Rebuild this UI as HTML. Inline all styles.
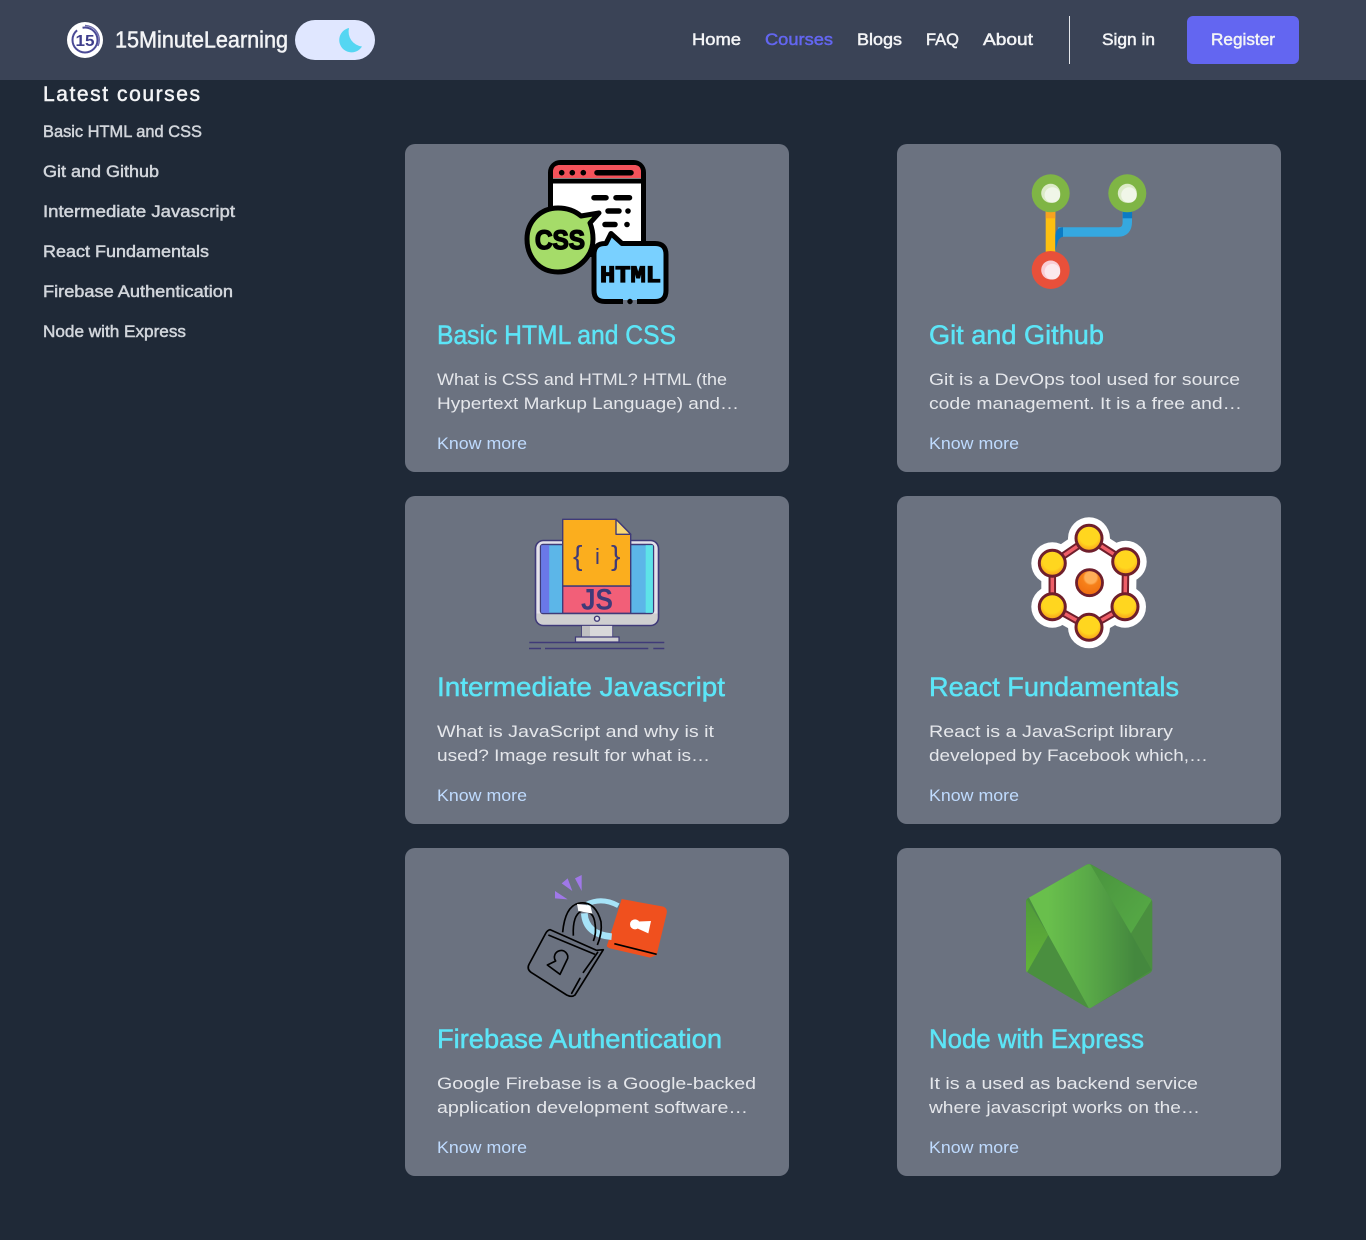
<!DOCTYPE html>
<html lang="en"><head><meta charset="utf-8"><title>15MinuteLearning</title>
<style>
html,body{margin:0;padding:0;background:#1f2937}
svg{display:block}
text{font-family:"Liberation Sans",sans-serif}
.m{stroke-width:.5;paint-order:stroke}
.nav{font-size:17px;fill:#f3f4f6;stroke:#f3f4f6}
.side{font-size:17px;fill:#d1d5db;stroke:#d1d5db}
.t{font-size:27px;fill:#5ce5f7;stroke:#5ce5f7}
.d{font-size:16.5px;fill:#e5e7eb}
.k{font-size:16.5px;fill:#bfdbfe}
</style></head><body>
<svg xmlns="http://www.w3.org/2000/svg" width="1366" height="1240" viewBox="0 0 1366 1240">
<defs>
<linearGradient id="n1" gradientUnits="userSpaceOnUse" x1="100" y1="0" x2="360" y2="0"><stop offset="0" stop-color="#69bf4c"/><stop offset=".45" stop-color="#5aaa48"/><stop offset="1" stop-color="#44883e"/></linearGradient>
<linearGradient id="n2" gradientUnits="userSpaceOnUse" x1="250" y1="60" x2="400" y2="180"><stop offset="0" stop-color="#4b963f"/><stop offset="1" stop-color="#55a845"/></linearGradient>
<linearGradient id="n3" gradientUnits="userSpaceOnUse" x1="50" y1="130" x2="60" y2="350"><stop offset="0" stop-color="#509a3a"/><stop offset="1" stop-color="#62b438"/></linearGradient>
<radialGradient id="y" cx=".5" cy=".38" r=".62"><stop offset=".6" stop-color="#ffd61f"/><stop offset=".75" stop-color="#fdbd1d"/><stop offset="1" stop-color="#f8a01a"/></radialGradient>
<radialGradient id="o" cx=".55" cy=".3" r=".75"><stop offset=".3" stop-color="#ffae58"/><stop offset=".4" stop-color="#f7811a"/><stop offset="1" stop-color="#ee6a0e"/></radialGradient>
</defs>
<rect width="1366" height="1240" fill="#1f2937"/>
<rect width="1366" height="80" fill="#3a4356"/>

<!-- logo -->
<circle cx="85" cy="40" r="18" fill="#fff"/>
<circle cx="85" cy="40" r="12.5" fill="none" stroke="#4a4a96" stroke-width="2" stroke-dasharray="50 6"/>
<path d="M85 25.500A14.500 14.500 0 0 1 98 46" fill="none" stroke="#6d6cab" stroke-width="1.400"/>
<text x="75.500" y="46" font-size="16" font-weight="700" fill="#3f3e8c" textLength="19" lengthAdjust="spacingAndGlyphs">15</text>
<text class="m" x="115" y="47.500" font-size="23" fill="#f3f4f6" stroke="#f3f4f6" textLength="173" lengthAdjust="spacingAndGlyphs">15MinuteLearning</text>
<rect x="295" y="20" width="80" height="40" rx="20" fill="#e0e7ff"/>
<path d="M349 28A12.300 12.300 0 1 0 362 46.500A15 15 0 0 1 349 28Z" fill="#55d6f2"/>

<!-- nav -->
<text class="nav m" x="692" y="45" textLength="49" lengthAdjust="spacingAndGlyphs">Home</text>
<text class="nav m" x="765" y="45" style="fill:#6366f1;stroke:#6366f1" textLength="68" lengthAdjust="spacingAndGlyphs">Courses</text>
<text class="nav m" x="857" y="45" textLength="45" lengthAdjust="spacingAndGlyphs">Blogs</text>
<text class="nav m" x="926" y="45" textLength="33" lengthAdjust="spacingAndGlyphs">FAQ</text>
<text class="nav m" x="983" y="45" textLength="50" lengthAdjust="spacingAndGlyphs">About</text>
<rect x="1069" y="16" width="1" height="48" fill="#e5e7eb"/>
<text class="nav m" x="1102" y="45" textLength="53" lengthAdjust="spacingAndGlyphs">Sign in</text>
<rect x="1187" y="16" width="112" height="48" rx="6" fill="#6366f1"/>
<text class="nav m" x="1211" y="45" textLength="64" lengthAdjust="spacingAndGlyphs">Register</text>

<!-- sidebar -->
<text class="m" x="43" y="101" font-size="21" fill="#f3f4f6" stroke="#f3f4f6" textLength="157" lengthAdjust="spacing">Latest courses</text>
<text class="side m" x="43" y="137" textLength="159" lengthAdjust="spacingAndGlyphs">Basic HTML and CSS</text>
<text class="side m" x="43" y="177" textLength="116" lengthAdjust="spacingAndGlyphs">Git and Github</text>
<text class="side m" x="43" y="217" textLength="192" lengthAdjust="spacingAndGlyphs">Intermediate Javascript</text>
<text class="side m" x="43" y="257" textLength="166" lengthAdjust="spacingAndGlyphs">React Fundamentals</text>
<text class="side m" x="43" y="297" textLength="190" lengthAdjust="spacingAndGlyphs">Firebase Authentication</text>
<text class="side m" x="43" y="337" textLength="143" lengthAdjust="spacingAndGlyphs">Node with Express</text>

<!-- cards -->
<g fill="#6b7280">
<rect x="405" y="144" width="384" height="328" rx="10"/>
<rect x="897" y="144" width="384" height="328" rx="10"/>
<rect x="405" y="496" width="384" height="328" rx="10"/>
<rect x="897" y="496" width="384" height="328" rx="10"/>
<rect x="405" y="848" width="384" height="328" rx="10"/>
<rect x="897" y="848" width="384" height="328" rx="10"/>
</g>

<text class="t m" x="437" y="344" textLength="239" lengthAdjust="spacingAndGlyphs">Basic HTML and CSS</text>
<text class="d" x="437" y="385" textLength="290" lengthAdjust="spacingAndGlyphs">What is CSS and HTML? HTML (the</text>
<text class="d" x="437" y="409" textLength="302" lengthAdjust="spacingAndGlyphs">Hypertext Markup Language) and…</text>
<text class="k" x="437" y="449" textLength="90" lengthAdjust="spacingAndGlyphs">Know more</text>

<text class="t m" x="929" y="344" textLength="175" lengthAdjust="spacingAndGlyphs">Git and Github</text>
<text class="d" x="929" y="385" textLength="311" lengthAdjust="spacingAndGlyphs">Git is a DevOps tool used for source</text>
<text class="d" x="929" y="409" textLength="313" lengthAdjust="spacingAndGlyphs">code management. It is a free and…</text>
<text class="k" x="929" y="449" textLength="90" lengthAdjust="spacingAndGlyphs">Know more</text>

<text class="t m" x="437" y="696" textLength="288" lengthAdjust="spacingAndGlyphs">Intermediate Javascript</text>
<text class="d" x="437" y="737" textLength="277" lengthAdjust="spacingAndGlyphs">What is JavaScript and why is it</text>
<text class="d" x="437" y="761" textLength="273" lengthAdjust="spacingAndGlyphs">used? Image result for what is…</text>
<text class="k" x="437" y="801" textLength="90" lengthAdjust="spacingAndGlyphs">Know more</text>

<text class="t m" x="929" y="696" textLength="250" lengthAdjust="spacingAndGlyphs">React Fundamentals</text>
<text class="d" x="929" y="737" textLength="244" lengthAdjust="spacingAndGlyphs">React is a JavaScript library</text>
<text class="d" x="929" y="761" textLength="279" lengthAdjust="spacingAndGlyphs">developed by Facebook which,…</text>
<text class="k" x="929" y="801" textLength="90" lengthAdjust="spacingAndGlyphs">Know more</text>

<text class="t m" x="437" y="1048" textLength="285" lengthAdjust="spacingAndGlyphs">Firebase Authentication</text>
<text class="d" x="437" y="1089" textLength="319" lengthAdjust="spacingAndGlyphs">Google Firebase is a Google-backed</text>
<text class="d" x="437" y="1113" textLength="311" lengthAdjust="spacingAndGlyphs">application development software…</text>
<text class="k" x="437" y="1153" textLength="90" lengthAdjust="spacingAndGlyphs">Know more</text>

<text class="t m" x="929" y="1048" textLength="215" lengthAdjust="spacingAndGlyphs">Node with Express</text>
<text class="d" x="929" y="1089" textLength="269" lengthAdjust="spacingAndGlyphs">It is a used as backend service</text>
<text class="d" x="929" y="1113" textLength="271" lengthAdjust="spacingAndGlyphs">where javascript works on the…</text>
<text class="k" x="929" y="1153" textLength="90" lengthAdjust="spacingAndGlyphs">Know more</text>

<!-- icon 1: HTML/CSS -->
<rect x="550.500" y="162.500" width="93" height="92" rx="10" fill="#fff" stroke="#000" stroke-width="5"/>
<path d="M553 178V172q0-7 7-7h74q7 0 7 7v6z" fill="#f4525a"/>
<rect x="550" y="178.500" width="94" height="5" fill="#000"/>
<g fill="#000"><circle cx="561.700" cy="172.700" r="2.800"/><circle cx="572.300" cy="172.700" r="2.800"/><circle cx="583.300" cy="172.700" r="2.800"/><circle cx="628" cy="211" r="2.800"/><circle cx="627" cy="224.500" r="2.800"/></g>
<g stroke="#000" stroke-width="5.500" stroke-linecap="round"><path d="M597 172.700H631M594 197.700H606M616 197.700H629.500M608 211H619M605 224.500H615"/></g>
<path d="M558 208c9 0 17 3 23 8l18-3-9 10c2 5 3 10 3 16 0 18-16 33-35 33s-31-15-31-33 14-31 31-31z" fill="#a5dc69" stroke="#000" stroke-width="5" stroke-linejoin="round"/>
<text x="535" y="249" font-size="27" font-weight="700" fill="#000" stroke="#000" stroke-width="1.500" textLength="50" lengthAdjust="spacingAndGlyphs">CSS</text>
<path d="M606 243.500L611 233.500l11 10h33q11 0 11 11v36q0 11-11 11h-50q-11 0-11-11v-36q0-11 11-11z" fill="#79d0ff" stroke="#000" stroke-width="5" stroke-linejoin="round"/>
<rect x="623" y="298.500" width="14" height="5.500" fill="#6b7280"/><rect x="623" y="297" width="14" height="3" fill="#79d0ff"/><circle cx="630" cy="301.500" r="2.700" fill="#000"/>
<text x="600" y="282" font-size="23" font-weight="700" fill="#000" stroke="#000" stroke-width="1.200" textLength="61" lengthAdjust="spacingAndGlyphs" style="font-family:'Liberation Mono',monospace">HTML</text>

<!-- icon 2: Git -->
<rect x="1045.700" y="205" width="9.600" height="50" fill="#fdc010"/>
<rect x="1045.700" y="208" width="9.600" height="10.300" fill="#f7a21f"/>
<path d="M1058 232H1118Q1127.300 232 1127.300 222V208" fill="none" stroke="#35a8e0" stroke-width="9.400"/>
<path d="M1055.300 251V236Q1055.300 228 1063 227.300V236.700Q1060 237 1058 241Z" fill="#0b7bc4"/>
<rect x="1122.700" y="208" width="9.400" height="10.300" fill="#0b7bc4"/>
<circle cx="1050.700" cy="193.300" r="19" fill="#7fb545"/>
<circle cx="1127.300" cy="193.300" r="19" fill="#7fb545"/>
<circle cx="1050.700" cy="270" r="19" fill="#e8503a"/>
<circle cx="1050.700" cy="193.300" r="9.500" fill="#dcebc8"/><circle cx="1127.300" cy="193.300" r="9.500" fill="#dcebc8"/><circle cx="1050.700" cy="270" r="9.500" fill="#f9cdd5"/>
<circle cx="1052.400" cy="195" r="7.800" fill="#f0f6e8"/>
<circle cx="1129" cy="195" r="7.800" fill="#f0f6e8"/>
<circle cx="1052.400" cy="271.700" r="7.800" fill="#fbe9ee"/>

<!-- icon 3: JS -->
<rect x="535.500" y="540.500" width="123" height="85" rx="8" fill="#e4e2ea" stroke="#3f3a78" stroke-width="1.600"/>
<path d="M536.500 613.500H657.500V617q0 7.500-7.500 7.500H544q-7.500 0-7.500-7.500z" fill="#cfcfd0"/>
<rect x="540.500" y="544.500" width="113" height="69" rx="2.500" fill="#5cb6e8" stroke="#3f3a78" stroke-width="1.400"/>
<rect x="541.200" y="545.200" width="8" height="67.600" fill="#6a78e8"/>
<rect x="645.700" y="545.200" width="7.200" height="67.600" fill="#5ee3e8"/>
<rect x="562.700" y="586" width="68" height="27.300" fill="#f25f78" stroke="#3f3a78" stroke-width="1.400"/>
<path d="M562.700 519.300H616L630.700 534.300V586H562.700Z" fill="#fbae1e" stroke="#3f3a78" stroke-width="1.400" stroke-linejoin="round"/>
<path d="M616 519.300L630.700 534.300H616Z" fill="#f9d873" stroke="#3f3a78" stroke-width="1.400" stroke-linejoin="round"/>
<text x="581" y="609.500" font-size="30" font-weight="700" fill="#3f3a78" textLength="32" lengthAdjust="spacingAndGlyphs">JS</text>
<text x="573" y="565" font-size="28" fill="#3f3a78" textLength="9.500" lengthAdjust="spacingAndGlyphs">{</text>
<text x="595" y="564" font-size="22" fill="#3f3a78">i</text>
<text x="611" y="565" font-size="28" fill="#3f3a78" textLength="9.500" lengthAdjust="spacingAndGlyphs">}</text>
<circle cx="597" cy="618.700" r="2.500" fill="#e4e2ea" stroke="#3f3a78" stroke-width="1.400"/>
<rect x="581.700" y="625.500" width="31" height="11.500" fill="#d9d9da" stroke="#3f3a78" stroke-width=".8"/>
<rect x="582" y="626" width="8" height="10.600" fill="#c0c0c2"/>
<rect x="575.500" y="637" width="43.500" height="5" fill="#cfcfd0" stroke="#3f3a78" stroke-width="1.200"/>
<path d="M529.300 642.500H664.300M529 648.500H541M545 648.500H648.300M653.300 648.500H664.300" stroke="#3f3a78" stroke-width="1.400" fill="none"/>

<!-- icon 4: React -->
<g stroke-linejoin="round">
<path d="M1089 538.300L1125.700 561.700L1125 606.700L1089 627.300L1052.300 606.700L1052.300 563.300Z" fill="#fff" stroke="#fff" stroke-width="22"/>
<g fill="#fff"><circle cx="1089" cy="538.300" r="21"/><circle cx="1125.700" cy="561.700" r="21"/><circle cx="1125" cy="606.700" r="21"/><circle cx="1089" cy="627.300" r="21"/><circle cx="1052.300" cy="606.700" r="21"/><circle cx="1052.300" cy="563.300" r="21"/></g>
<path d="M1089 538.300L1125.700 561.700L1125 606.700L1089 627.300L1052.300 606.700L1052.300 563.300Z" fill="none" stroke="#6f1f2c" stroke-width="7.500"/>
<path d="M1089 538.300L1125.700 561.700L1125 606.700L1089 627.300L1052.300 606.700L1052.300 563.300Z" fill="none" stroke="#ee5f68" stroke-width="3.500"/>
</g>
<g fill="url(#y)" stroke="#6f1f2c" stroke-width="3">
<circle cx="1089" cy="538.300" r="13"/><circle cx="1125.700" cy="561.700" r="13"/><circle cx="1125" cy="606.700" r="13"/><circle cx="1089" cy="627.300" r="13"/><circle cx="1052.300" cy="606.700" r="13"/><circle cx="1052.300" cy="563.300" r="13"/>
</g>
<circle cx="1089.500" cy="582.700" r="13" fill="url(#o)" stroke="#6f1f2c" stroke-width="2.800"/>

<!-- icon 5: Firebase lock -->
<g transform="translate(515 865) scale(.33333)">
<path d="M120 78L120 100L158 103ZM140 55L158 40L172 78ZM180 40L200 30L200 78Z" fill="#a078e8"/>
<path d="M320 102L445 125Q458 130 455 145L425 270L405 278L285 250Q272 245 277 238Z" fill="#f0501e"/>
<path d="M298 236L425 268" stroke="#000" stroke-width="5" fill="none"/>
<circle cx="360" cy="178" r="15" fill="#fff"/><path d="M362 170L408 168L400 205L362 188Z" fill="#fff"/>
<path d="M310 122Q260 95 215 118" stroke="#a6e3f8" stroke-width="15" fill="none"/>
<path d="M208 145Q212 208 290 215" stroke="#a6e3f8" stroke-width="20" fill="none"/>
<path d="M143 202Q150 125 190 115Q240 105 258 170Q262 205 247 240" fill="none" stroke="#000" stroke-width="5"/>
<path d="M175 212Q172 150 200 138Q235 135 240 175Q245 205 235 228" fill="none" stroke="#000" stroke-width="5"/>
<path d="M186 117L226 122L232 146L190 138Z" fill="#fff"/>
<path d="M105 194L245 256L265 254L180 390Q170 398 155 390L48 322Q35 312 42 298L92 205Q97 196 105 194Z" fill="none" stroke="#000" stroke-width="5" stroke-linejoin="round"/>
<path d="M100 210L240 268" stroke="#000" stroke-width="5" fill="none"/>
<path d="M248 262L205 322M195 340L170 385" stroke="#000" stroke-width="5" fill="none" stroke-linecap="round"/>
<path d="M122 288A20 20 0 1 1 158 280L135 328L97 300Z" fill="none" stroke="#000" stroke-width="5" stroke-linejoin="round"/>
</g>

<!-- icon 6: Node -->
<g transform="translate(1015 855) scale(.33333)">
<path d="M213 30Q222 24 232 30L403 128Q412 133 412 143V340Q412 350 403 355L232 456Q222 462 213 456L42 355Q33 350 33 340V140Q33 132 42 128Z" fill="#4a8f3f"/>
<path d="M35 132L100 240L36 352Q33 350 33 340V140Z" fill="url(#n3)"/>
<path d="M42 128L213 30Q220 26 226 28L348 235L410 345L232 456Q226 460 222 460L100 240Z" fill="url(#n1)"/>
<path d="M226 28L403 128Q408 131 410 135L348 235Z" fill="url(#n2)"/>
</g>
</svg>
</body></html>
